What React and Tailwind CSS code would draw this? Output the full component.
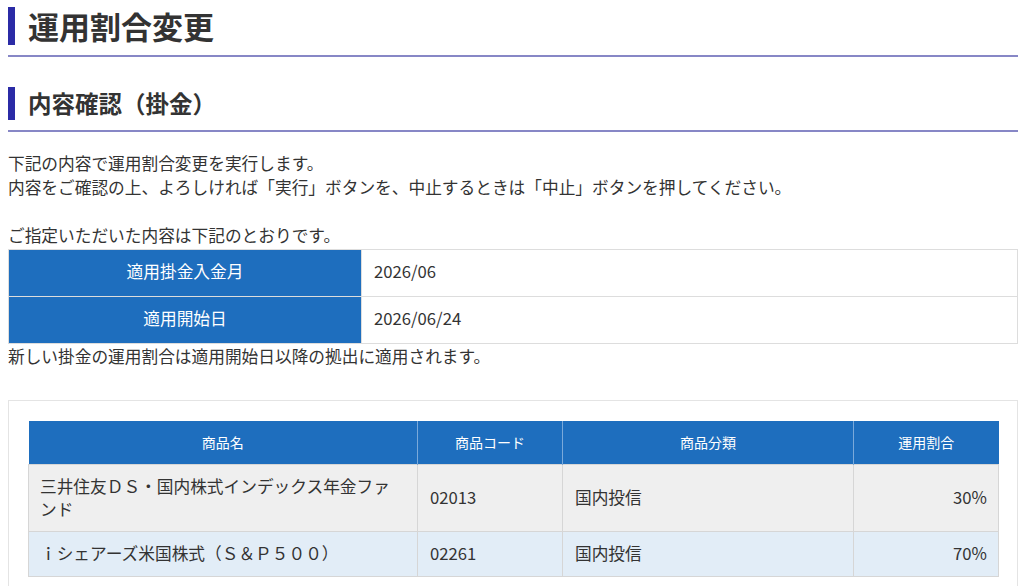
import React from 'react';

const font = { fontFamily: '"Noto Sans CJK JP", "Noto Sans", sans-serif' };

const products = [
  { name: '三井住友ＤＳ・国内株式インデックス年金ファンド', code: '02013', type: '国内投信', ratio: '30%', bg: 'bg-[#efefef]' },
  { name: 'ｉシェアーズ米国株式（Ｓ＆Ｐ５００）', code: '02261', type: '国内投信', ratio: '70%', bg: 'bg-[#e2edf7]' },
];

const Heading = ({ children, big }) => (
  <div className={`flex items-center border-b-2 border-[#8787c6] ${big ? 'pt-[7px] pb-[10px]' : 'mt-[30px] pb-[10px]'}`}>
    <div className={`w-[7px] bg-[#2b2ba6] ${big ? 'h-[38px]' : 'h-[33px]'}`} />
    <h1 className={`ml-[13px] font-bold text-[#333333] ${big ? 'text-[31px] leading-[38px]' : 'text-[23.5px] leading-[33px]'}`}>
      {children}
    </h1>
  </div>
);

const App = () => {
  return (
    <div className="min-h-[586px] bg-white pl-2 pr-[6px] text-[16.7px] text-[#333333]" style={font}>
      <Heading big>運用割合変更</Heading>
      <Heading>内容確認（掛金）</Heading>

      <p className="mt-[19px] leading-[24px]">
        下記の内容で運用割合変更を実行します。
        <br />
        内容をご確認の上、よろしければ「実行」ボタンを、中止するときは「中止」ボタンを押してください。
        <br />
        <br />
        ご指定いただいた内容は下記のとおりです。
      </p>

      <table className="mt-[2px] w-full border-collapse">
        <tbody>
          <tr className="h-[47px]">
            <th className="w-[353px] border border-[#dddddd] bg-[#1e6ebe] pb-[2px] text-center font-normal text-white">適用掛金入金月</th>
            <td className="border border-[#dddddd] pb-[2px] pl-[12px]">2026/06</td>
          </tr>
          <tr className="h-[47px]">
            <th className="w-[353px] border border-[#dddddd] bg-[#1e6ebe] pb-[2px] text-center font-normal text-white">適用開始日</th>
            <td className="border border-[#dddddd] pb-[2px] pl-[12px]">2026/06/24</td>
          </tr>
        </tbody>
      </table>
      <p className="leading-[24px]">新しい掛金の運用割合は適用開始日以降の拠出に適用されます。</p>

      <div className="mt-[32px] border border-[#e4e4e4] px-[19px] pt-[20px] pb-[30px]">
        <table className="w-full table-fixed border-collapse">
          <colgroup>
            <col className="w-[389px]" />
            <col className="w-[145px]" />
            <col className="w-[291px]" />
            <col className="w-[145px]" />
          </colgroup>
          <thead>
            <tr className="h-[43px] bg-[#1e6ebe] text-[14px] text-white">
              <th className="border-r border-[#7aa9da] font-normal">商品名</th>
              <th className="border-r border-[#7aa9da] font-normal">商品コード</th>
              <th className="border-r border-[#7aa9da] font-normal">商品分類</th>
              <th className="font-normal">運用割合</th>
            </tr>
          </thead>
          <tbody>
            {products.map((p) => (
              <tr key={p.code} className={`h-[45px] ${p.bg}`}>
                <td className="border border-[#d6d6d6] py-[10px] pl-[11px] pr-[16px] leading-[23px]">{p.name}</td>
                <td className="border border-[#d6d6d6] px-[12px]">{p.code}</td>
                <td className="border border-[#d6d6d6] px-[12px]">{p.type}</td>
                <td className="border border-[#d6d6d6] px-[11px] text-right">{p.ratio}</td>
              </tr>
            ))}
          </tbody>
        </table>
      </div>
    </div>
  );
};

export default App;
